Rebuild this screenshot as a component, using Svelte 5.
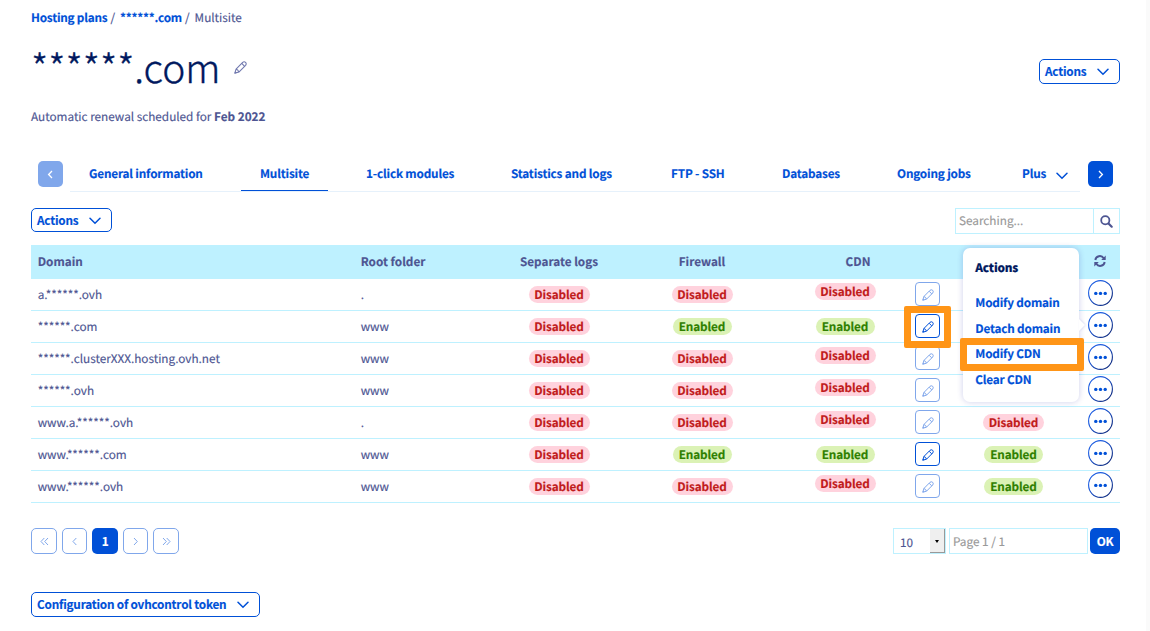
<script>
  const tabs = ['General information', 'Multisite', '1-click modules', 'Statistics and logs', 'FTP - SSH', 'Databases', 'Ongoing jobs'];
  const rows = [
    { domain: 'a.******.ovh', root: '.', logs: false, firewall: false, cdn: false, git: null },
    { domain: '******.com', root: 'www', logs: false, firewall: true, cdn: true, git: null, menu: true },
    { domain: '******.clusterXXX.hosting.ovh.net', root: 'www', logs: false, firewall: false, cdn: false, git: null },
    { domain: '******.ovh', root: 'www', logs: false, firewall: false, cdn: false, git: null },
    { domain: 'www.a.******.ovh', root: '.', logs: false, firewall: false, cdn: false, git: false },
    { domain: 'www.******.com', root: 'www', logs: false, firewall: true, cdn: true, git: true },
    { domain: 'www.******.ovh', root: 'www', logs: false, firewall: false, cdn: false, git: true }
  ];
  const menu = ['Modify domain', 'Detach domain', 'Modify CDN', 'Clear CDN'];
</script>

{#snippet chevron()}
  <svg class="chev" width="12" height="8" viewBox="0 0 12 8"><path d="M1 1.2 6 6.3 11 1.2" fill="none" stroke="currentColor" stroke-width="1.5" stroke-linecap="round" /></svg>
{/snippet}

{#snippet pencil()}
  <svg class="pen" width="12" height="12" viewBox="0 0 12 12"><g fill="none" stroke="currentColor" stroke-width="1" stroke-linejoin="round"><path d="M.8 11.2 1.9 7.5 8 1.3Q9.3.2 10.7 1.3 11.8 2.6 10.7 4L4.5 10.2Z" /><path d="M1.9 7.5Q3.9 8 4.5 10.2M7.2 2.3l2.6 2.6" /></g><path d="m.4 11.6.6-2.2 1.6 1.6Z" fill="currentColor" /></svg>
{/snippet}

{#snippet badge(on)}
  <span class="badge" class:on>{on ? 'Enabled' : 'Disabled'}</span>
{/snippet}

<div class="page">
  <nav class="crumbs"><b>Hosting plans</b><span class="s1">/</span><b class="c2">******.com</b><span class="s2">/</span><span>Multisite</span></nav>

  <header class="head">
    <h1>******.com</h1>
    <span class="edit">{@render pencil()}</span>
    <button class="btn top">Actions{@render chevron()}</button>
  </header>
  <p class="renew">Automatic renewal scheduled for <b>Feb 2022</b></p>

  <div class="tabbar">
    <button class="arrow off" aria-label="Previous"><svg width="7" height="9" viewBox="0 0 7 9"><path d="M5 1 1.6 4.5 5 8" /></svg></button>
    <div class="tabs">
      {#each tabs as t, i}
        <span class="tab" class:active={i === 1}>{t}</span>
      {/each}
      <span class="tab plus">Plus{@render chevron()}</span>
    </div>
    <button class="arrow" aria-label="Next"><svg width="7" height="9" viewBox="0 0 7 9"><path d="M2 1 5.4 4.5 2 8" /></svg></button>
  </div>

  <div class="tools">
    <button class="btn">Actions{@render chevron()}</button>
    <div class="search">
      <span>Searching...</span>
      <i><svg width="13" height="13" viewBox="0 0 13 13"><circle cx="5.3" cy="5.3" r="4.1" fill="none" stroke="currentColor" stroke-width="1.8" /><path d="m8.5 8.5 3.2 3.2" stroke="currentColor" stroke-width="2.2" stroke-linecap="round" /></svg></i>
    </div>
  </div>

  <div class="table">
    <div class="row th">
      <span class="l">Domain</span><span class="r">Root folder</span><span>Separate logs</span><span>Firewall</span><span>CDN</span><span></span>
      <span><svg class="sync" width="12" height="12" viewBox="0 0 12 12"><g fill="none" stroke="currentColor" stroke-width="1.9"><path d="M1.3 5A4.6 4.6 0 0 1 9.7 3.2" /><path d="M10.7 7A4.6 4.6 0 0 1 2.3 8.8" /></g><path d="M11.7.6V5H7.2ZM.3 11.4V7H4.8Z" fill="currentColor" /></svg></span>
    </div>
    {#each rows as r}
      <div class="row">
        <span class="l">{r.domain}</span>
        <span class="r">{r.root}</span>
        <span>{@render badge(r.logs)}</span>
        <span>{@render badge(r.firewall)}</span>
        <div class="cdn" class:up={!r.cdn}>
          <span>{@render badge(r.cdn)}</span>
          <button class="pencil" class:off={!r.cdn} aria-label="Edit">{@render pencil()}{#if r.menu}<i class="mark"></i>{/if}</button>
        </div>
        <span>{#if r.git !== null}{@render badge(r.git)}{/if}</span>
        <div class="more">
          <button aria-label="More"><svg width="25" height="26" viewBox="0 0 25 26"><defs><linearGradient id="ring" x1="0" y1="0" x2="1" y2="1"><stop offset="0.3" stop-color="#1a5be0" /><stop offset="1" stop-color="#0b1f6b" /></linearGradient></defs><ellipse cx="12.5" cy="13" rx="11.9" ry="12.4" fill="#fff" stroke="url(#ring)" stroke-width="1.1" /><g fill="#0050d7"><circle cx="7.8" cy="13.4" r="1.7" /><circle cx="12.5" cy="13.4" r="1.7" /><circle cx="17.2" cy="13.4" r="1.7" /></g></svg></button>
          {#if r.menu}
            <div class="menu">
              <strong>Actions</strong>
              {#each menu as m, i}
                <a class:picked={i === 2} href="#{i}">{m}</a>
              {/each}
            </div>
          {/if}
        </div>
      </div>
    {/each}
  </div>

  <div class="pager">
    <button class="pg" aria-label="First"><svg width="9" height="9" viewBox="0 0 9 9"><path d="M4.3 1 1 4.5 4.3 8M8 1 4.7 4.5 8 8" /></svg></button>
    <button class="pg p25" aria-label="Previous page"><svg width="9" height="9" viewBox="0 0 9 9"><path d="M6.3 1 3 4.5 6.3 8" /></svg></button>
    <button class="pg cur">1</button>
    <button class="pg p25" aria-label="Next page"><svg width="9" height="9" viewBox="0 0 9 9"><path d="M3 1 6.3 4.5 3 8" /></svg></button>
    <button class="pg" aria-label="Last"><svg width="9" height="9" viewBox="0 0 9 9"><path d="M1 1 4.3 4.5 1 8M4.7 1 8 4.5 4.7 8" /></svg></button>
    <div class="select"><span>10</span><i></i></div>
    <div class="goto">Page 1 / 1</div>
    <button class="ok">OK</button>
  </div>

  <button class="btn token">Configuration of ovhcontrol token{@render chevron()}</button>
</div>

<style>
  :global(body) { margin: 0; background: #fff; }
  .page { box-sizing: border-box; width: 1150px; height: 631px; overflow: hidden; padding: 8px 26px 0 31px; border-right: 4px solid #fafafa; display: flex; flex-direction: column; font: 11.75px/20px "Noto Sans CJK JP", "Noto Sans CJK SC", sans-serif; color: #4d5592; text-rendering: geometricPrecision; -webkit-text-stroke: .15px; }
  .page * { box-sizing: border-box; white-space: nowrap; }
  button { font: inherit; font-weight: 700; letter-spacing: -.2px; color: #0050d7; background: #fff; padding: 0; margin: 0; border: 0; flex: none; }
  svg { display: block; flex: none; }
  .crumbs { display: flex; height: 20px; }
  .crumbs b { color: #0050d7; letter-spacing: -.2px; }
  .s1 { margin: 0 5px 0 3px; }
  .s2 { margin: 0 5px 0 3px; }
  .head { display: flex; height: 79px; align-items: flex-start; }
  h1 { margin: 8px 0 0; font-size: 38.9px; line-height: 62px; font-weight: 300; color: #00185e; -webkit-text-stroke: .35px; }
  .edit { margin: 33px 0 0 14px; color: #7078ae; }
  .edit :global(svg) { width: 13px; height: 13px; }
  .btn { display: flex; align-items: center; width: 81px; height: 24px; padding: 0 10px 0 5px; border: 1px solid #0050d7; border-radius: 5px; justify-content: space-between; }
  .btn .chev { margin-top: 2px; }
  .top { margin: 31px 0 0 auto; height: 25px; padding-bottom: 1px; }
  .renew { margin: 0; height: 20px; }
  .tabbar { display: flex; margin-top: 34px; height: 31px; padding: 0 7px; }
  .arrow { display: flex; align-items: center; justify-content: center; width: 25px; height: 26px; border-radius: 5px; background: #0050d7; }
  .arrow path, .pg path { fill: none; stroke: currentColor; stroke-width: 1.3; }
  .arrow { color: #fff; }
  .arrow.off { background: #80a7eb; }
  .tabs { display: grid; grid-template-columns: 171px 106px 145px 160px 111px 115px 126px 76px; width: 1010px; margin: 0 8px 0 7px; border-bottom: 1px solid #e6f1fb; }
  .tab { height: 30px; padding: 3px 0 0 19px; font-weight: 700; color: #0050d7; letter-spacing: -.17px; }
  .tab.active { width: 87px; border-bottom: 1px solid #0050d7; }
  .plus { display: flex; padding-left: 18px; }
  .plus .chev { margin: 8px 0 0 10px; }
  .tools { display: flex; justify-content: space-between; margin-top: 16px; height: 37px; }
  .search { display: flex; width: 165px; height: 26px; border: 1px solid #bef1ff; color: #999; }
  .search span { flex: 1; padding: 2px 0 0 3px; }
  .search i { width: 26px; border-left: 1px solid #bef1ff; padding: 6px 0 0 6px; color: #4d5592; }
  .row { display: grid; grid-template-columns: 323px 129px 152px 134px 178px 133px 40px; height: 32px; border-bottom: 1px solid #bef1ff; text-align: center; }
  .row > span { padding-top: 5px; }
  .row > .l, .row > .r { text-align: left; padding: 6px 0 0 6.7px; }
  .th { height: 34px; background: #bef1ff; font-weight: 700; }
  .row.th > span { padding-top: 7px; }
  .row.th .sync { margin: 3px auto 0; }
  .badge { display: block; width: 61px; height: 17px; line-height: 17px; margin: 2px auto 0; border-radius: 9px; background: #ffd2dd; color: #c11b1b; font-weight: 700; letter-spacing: -.12px; }
  .badge.on { width: 59px; background: #dbf2b5; color: #2f8000; }
  .cdn { display: flex; padding-left: 6px; }
  .cdn > span { width: 140px; padding-top: 5px; }
  .cdn.up > span { padding-top: 2px; }
  .pencil { position: relative; display: flex; justify-content: center; width: 25px; height: 24px; margin-top: 3px; padding-top: 6px; border: 1px solid #0050d7; border-radius: 4px; }
  .pencil.off { color: #80a7eb; border-color: #80a7eb; }
  .mark { position: absolute; z-index: 2; left: -12px; top: -9px; width: 47px; height: 42px; border: 7px solid #ff9517; border-radius: 2px; }
  .more { position: relative; padding: 1px 0 0 8px; }
  .more button { background: none; display: block; }
  .menu { position: absolute; z-index: 3; left: -117px; top: -63px; width: 116px; height: 154px; padding: 10px 0 0 12.3px; display: flex; flex-direction: column; align-items: flex-start; text-align: left; background: #fff; border-radius: 7px; box-shadow: 0 0 6px rgba(0, 14, 156, .2); font-weight: 700; letter-spacing: -.18px; }
  .menu::after { content: ""; position: absolute; left: 116px; top: 71px; border: 6px solid transparent; border-left-color: #fff; border-right: 0; filter: drop-shadow(1px 0 1px rgba(0, 14, 156, .12)); }
  .menu strong { color: #00185e; margin-bottom: 15px; }
  .menu a { position: relative; color: #0050d7; text-decoration: none; height: 25.6px; }
  .picked::before { content: ""; box-sizing: border-box; position: absolute; left: -15.8px; top: -6px; width: 124px; height: 33px; border: 7px solid #ff9517; border-radius: 2px; }
  .pager { display: flex; margin-top: 25px; height: 26px; }
  .pg { display: flex; align-items: center; justify-content: center; width: 26px; height: 26px; margin-right: 5px; border: 1px solid #80a7eb; border-radius: 5px; color: #80a7eb; }
  .p25 { width: 25px; }
  .pg path { stroke-width: 1; }
  .cur { background: #0050d7; color: #fff; border: 0; }
  .select { display: flex; margin-left: auto; width: 53px; border: 1px solid #bef1ff; padding-left: 6px; justify-content: space-between; }
  .select span { padding-top: 4px; }
  .select i { width: 15px; height: 24px; background: #efefef; border: solid #999; border-width: 0 1px 1px 0; padding: 11px 0 0 5px; }
  .select i::before { content: ""; display: block; width: 0; border: 2.5px solid transparent; border-top: 3px solid #000; border-bottom: 0; }
  .goto { width: 139px; margin: 0 2px 0 3px; border: 1px solid #bef1ff; color: #999; padding: 3px 0 0 3px; }
  .ok { width: 30px; background: #0050d7; color: #fff; border-radius: 5px; }
  .token { width: 229px; height: 25px; margin-top: 38px; padding-bottom: 1px; }
</style>
